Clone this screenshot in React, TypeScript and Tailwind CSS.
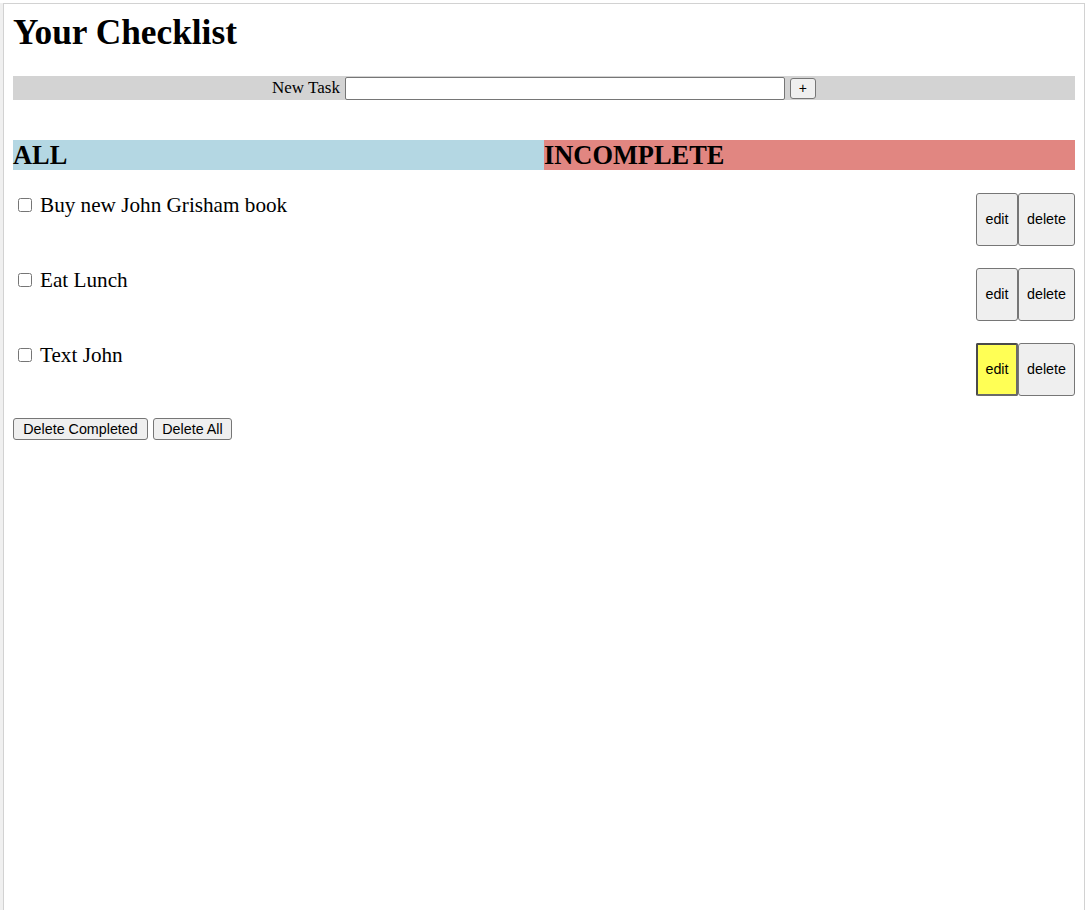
import React from 'react'

const tasks = [
  { id: 1, text: 'Buy new John Grisham book', active: false },
  { id: 2, text: 'Eat Lunch', active: false },
  { id: 3, text: 'Text John', active: true },
]

const serif = "font-['Liberation_Serif','Times_New_Roman',serif]"
const sans = "font-['Liberation_Sans',Arial,sans-serif]"

export default function App() {
  return (
    <div className="w-[1086px] h-[910px] bg-white overflow-hidden pl-[3px] pt-[3px]">
      <div
        className={`w-[1082px] min-h-[920px] border border-b-0 border-[#d2d2d2] shadow-[-3px_0_0_#f0f0f0] px-[9px] pt-[9px] text-black ${serif}`}
      >
        <h1 className="text-[35.3px] leading-[40px] font-bold mb-[23px]">Your Checklist</h1>

        {/* new task bar */}
        <div className="h-[24px] bg-[#d3d3d3] flex items-center justify-center text-[17px]">
          <label htmlFor="new-task" className="mr-[5px]">New Task</label>
          <input
            id="new-task"
            type="text"
            className="w-[440px] h-[23px] bg-white border border-[#767676] rounded-[2px]"
          />
          <button
            className={`ml-[5px] w-[26px] h-[21px] bg-[#efefef] border border-[#767676] rounded-[3px] text-[14px] leading-none ${sans}`}
          >
            +
          </button>
        </div>

        {/* filters */}
        <div className="mt-[40px] flex h-[30px] text-[26.4px] leading-[30px] font-bold">
          <div className="flex-1 bg-[#b4d7e3]">ALL</div>
          <div className="flex-1 bg-[#e18681]">INCOMPLETE</div>
        </div>

        {/* list */}
        <ul className="pt-[1px]">
          {tasks.map(t => (
            <li key={t.id} className="mt-[22px] flex items-start justify-between">
              <div className="flex items-start text-[21.2px] leading-[24px]">
                <input
                  type="checkbox"
                  className="mt-[5px] ml-[5px] mr-[8px] w-[14px] h-[14px]"
                />
                <span>{t.text}</span>
              </div>
              <div className={`flex text-[14.3px] ${sans}`}>
                <button
                  className={
                    t.active
                      ? 'w-[42px] h-[53px] bg-[#ffff55] border-2 border-[#4a4a4a] border-r-[#6a6a6a] border-b-[#6a6a6a] rounded-[2px]'
                      : 'w-[42px] h-[53px] bg-[#efefef] border border-[#767676] rounded-[3px]'
                  }
                >
                  edit
                </button>
                <button className="w-[57px] h-[53px] bg-[#efefef] border border-[#767676] rounded-[3px]">
                  delete
                </button>
              </div>
            </li>
          ))}
        </ul>

        <div className={`mt-[22px] flex gap-[5px] text-[14.3px] ${sans}`}>
          <button className="w-[135px] h-[22px] bg-[#efefef] border border-[#767676] rounded-[3px]">
            Delete Completed
          </button>
          <button className="w-[79px] h-[22px] bg-[#efefef] border border-[#767676] rounded-[3px]">
            Delete All
          </button>
        </div>
      </div>
    </div>
  )
}
